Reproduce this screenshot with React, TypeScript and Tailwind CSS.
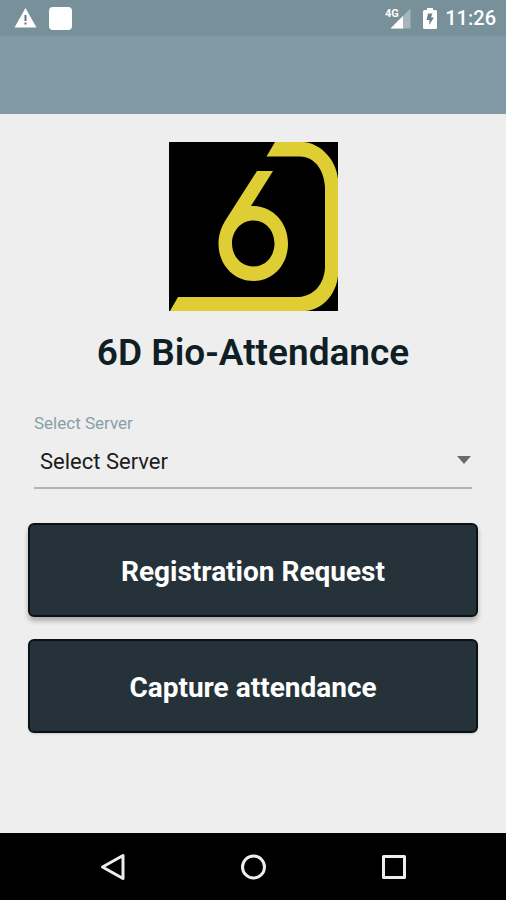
import React from "react";

function StatusBar() {
  return (
    <div className="flex h-9 items-center justify-between bg-[#77909a] pr-2.5 pl-3.5 text-white">
      <div className="flex items-center gap-3">
        <svg width="23" height="20" viewBox="0 0 23 20" aria-hidden="true">
          <path d="M11.5 0 L22.5 19.5 H0.5 Z" fill="#fff" />
          <path d="M10.5 7h2v6h-2zM10.5 14.5h2v2h-2z" fill="#63747c" />
        </svg>
        <span className="size-[23px] rounded bg-white" />
      </div>
      <div className="flex items-center gap-2">
        <div className="flex items-center gap-3">
          <svg width="26" height="21" viewBox="0 0 26 21" aria-hidden="true">
            <path d="M25.5 0.5 V20.5 H5.5 Z" fill="#a6b6bd" />
            <path d="M18 8 V20.5 H5.5 Z" fill="#fff" />
            <text x="0" y="9" fill="#fff" fontFamily="Roboto, sans-serif" fontSize="11" fontWeight="700">
              4G
            </text>
          </svg>
          <svg width="14" height="21" viewBox="0 0 14 21" aria-hidden="true">
            <path d="M4 0h6v2h2.500a1.500 1.500 0 0 1 1.500 1.500v16a1.500 1.500 0 0 1-1.500 1.500h-11a1.500 1.500 0 0 1-1.500-1.500v-16a1.500 1.500 0 0 1 1.500-1.500h2.500z" fill="#fff" />
            <path d="M9.500 5.500H5L3.500 12H6.500L6 17L11 9.500H8Z" fill="#6a808a" />
          </svg>
        </div>
        <span className="text-xl leading-6 font-medium">11:26</span>
      </div>
    </div>
  );
}

function Logo() {
  return (
    <svg width="169" height="169" viewBox="0 0 169 169" role="img" aria-label="6D logo">
      <rect width="169" height="169" fill="#000" />
      <g fill="#dfce33">
        <path d="M106 0H134C151 1 167 17 169 37V134C167 153 153 168 136 169H1L9 155H130C145 154 155 142 156 126V45C155 28 146 15 131 14.500H97.500Z" />
        <path
          fillRule="evenodd"
          d="M88 29H104L82 64C103 63 119 80 119 101.500C119 123 104 139 84.500 139C65 139 49.500 123 49.500 101.500C49.500 93 52 86 56 79ZM84.500 78.500C72 78.500 63 89 63 101.500C63 114 72 124.500 84.500 124.500C97 124.500 105.500 114 105.500 101.500C105.500 89 97 78.500 84.500 78.500Z"
        />
      </g>
    </svg>
  );
}

function ServerSelect() {
  return (
    <div className="flex w-full flex-col px-1.5">
      <label htmlFor="server" className="text-[17px] leading-6 text-[#86a0a6]">
        Select Server
      </label>
      <div className="grid items-center border-b-2 border-[#b2b4b5]">
        <select
          id="server"
          className="col-start-1 row-start-1 h-[52px] w-full appearance-none bg-transparent px-1.5 text-[22px] text-[#1c1c1c] outline-none"
        >
          <option>Select Server</option>
        </select>
        <svg
          className="pointer-events-none col-start-1 row-start-1 mr-px mb-0.5 justify-self-end"
          width="14"
          height="8"
          viewBox="0 0 14 8"
          aria-hidden="true"
        >
          <path d="M0 0H14L7 8Z" fill="#6b6b6b" />
        </svg>
      </div>
    </div>
  );
}

function ActionButton({ children, raised = false }: { children: React.ReactNode; raised?: boolean }) {
  return (
    <button
      type="button"
      className={`h-[94px] w-full rounded-md border-2 border-[#0b1216] bg-[#263239] pt-1 text-[28px] leading-8 font-bold text-white ${
        raised ? "shadow-[0_4px_5px_rgba(0,0,0,0.28)]" : "shadow-[0_1px_2px_rgba(0,0,0,0.15)]"
      }`}
    >
      {children}
    </button>
  );
}

function NavigationBar() {
  return (
    <nav className="flex h-[67px] items-center justify-center gap-[114px] bg-black">
      <button type="button" aria-label="Back">
        <svg width="26" height="28" viewBox="0 0 26 28" fill="none" stroke="#eee" strokeWidth="3" strokeLinejoin="round">
          <path d="M23 2.500V25.500L2.500 14Z" />
        </svg>
      </button>
      <button type="button" aria-label="Home">
        <svg width="26" height="28" viewBox="0 0 26 28" fill="none" stroke="#eee" strokeWidth="3">
          <circle cx="13.5" cy="14" r="11" />
        </svg>
      </button>
      <button type="button" aria-label="Recent apps">
        <svg width="26" height="28" viewBox="0 0 26 28" fill="none" stroke="#eee" strokeWidth="3" strokeLinejoin="round">
          <rect x="3.5" y="3.5" width="21" height="21" />
        </svg>
      </button>
    </nav>
  );
}

export default function App() {
  return (
    <div className="flex min-h-screen flex-col bg-[#eee] font-['Roboto',sans-serif]">
      <StatusBar />
      <header className="h-[78px] bg-[#8099a4]" />
      <main className="flex flex-1 flex-col items-center px-7 pt-7">
        <Logo />
        <h1 className="mt-5 text-[37px] leading-11 font-semibold text-[#101e25]">6D Bio-Attendance</h1>
        <div className="mt-9 w-full">
          <ServerSelect />
        </div>
        <div className="mt-[34px] flex w-full flex-col gap-[22px]">
          <ActionButton raised>Registration Request</ActionButton>
          <ActionButton>Capture attendance</ActionButton>
        </div>
      </main>
      <NavigationBar />
    </div>
  );
}
